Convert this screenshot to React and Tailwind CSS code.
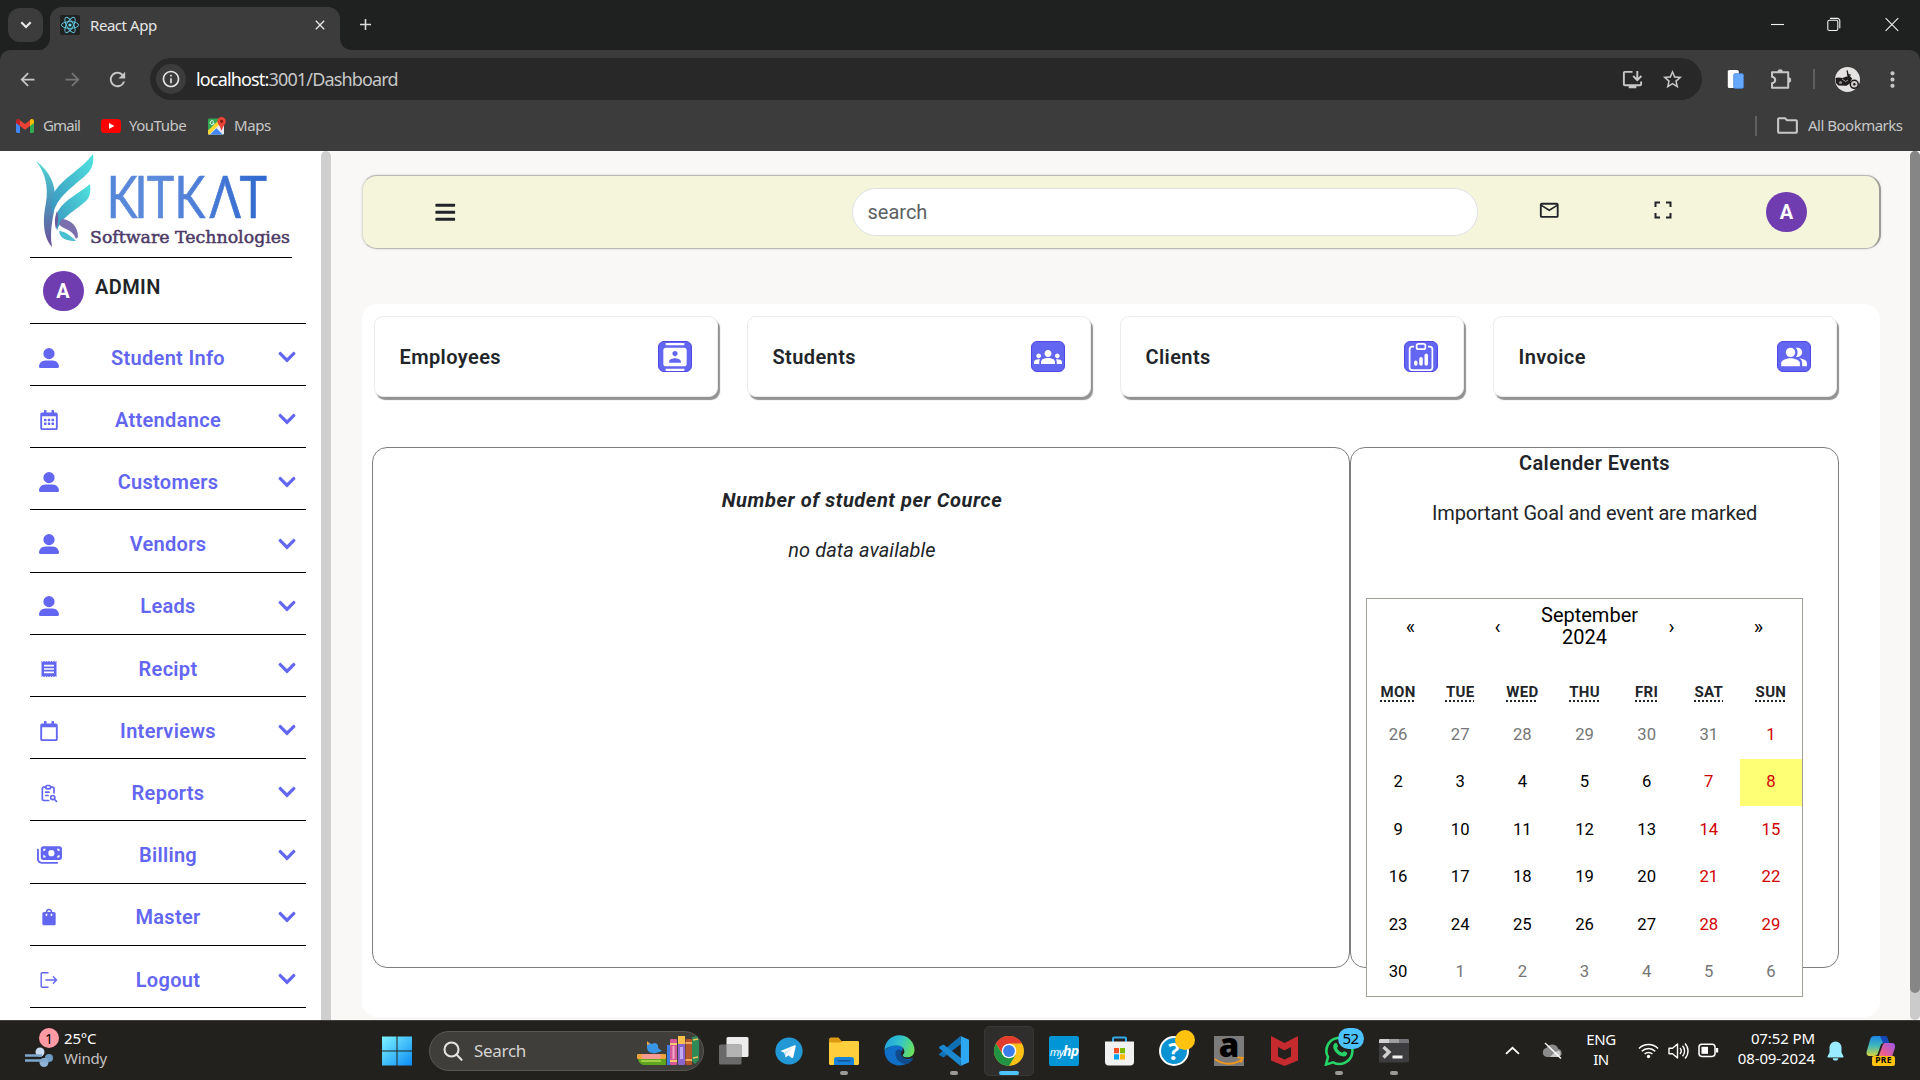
import React from "react";
import { FaRegCalendarAlt, FaRegCalendar, FaBars, FaChevronDown } from "react-icons/fa";
import { FaMoneyBills, FaUserLarge } from "react-icons/fa6";
import { TbReportSearch } from "react-icons/tb";
import {
  MdReceipt,
  MdShoppingBag,
  MdContacts,
  MdGroups,
  MdPeopleAlt,
  MdMailOutline,
  MdArrowBack,
  MdArrowForward,
  MdRefresh,
  MdOutlineInfo,
  MdInstallDesktop,
  MdStarOutline,
  MdMoreVert,
  MdOutlineFolder,
  MdAdd,
  MdClose,
} from "react-icons/md";
import { BsClipboardData } from "react-icons/bs";

const LogoutIcon = () => (
  <svg width="20" height="20" viewBox="0 0 20 20" fill="none" stroke="currentColor" strokeWidth="1.4">
    <path d="M9.5 2.7H3.200a1 1 0 0 0-1 1v12.600a1 1 0 0 0 1 1h6.300" />
    <path d="M6.800 10h10.600M14.400 6.800l3.100 3.200-3.100 3.200" strokeLinecap="round" />
  </svg>
);

const BillsIcon = () => <FaMoneyBills className="h-5 w-[25px]" />;

/* ---------- browser frame ---------- */

const ReactLogo = () => (
  <svg width="20" height="20" viewBox="0 0 20 20">
    <rect width="20" height="20" rx="2" fill="#222222" />
    <g fill="none" stroke="#5fc4dc" strokeWidth="0.95">
      <ellipse cx="10" cy="10" rx="8.6" ry="3.4" />
      <ellipse cx="10" cy="10" rx="8.6" ry="3.4" transform="rotate(60 10 10)" />
      <ellipse cx="10" cy="10" rx="8.6" ry="3.4" transform="rotate(120 10 10)" />
    </g>
    <circle cx="10" cy="10" r="1.6" fill="#61dafb" />
  </svg>
);

const TabStrip = () => (
  <div className="flex h-[50px] items-start bg-[#1f2120]">
    <div className="ml-2 mt-2 flex h-[34px] w-[35px] items-center justify-center rounded-xl bg-[#3c3c3c]">
      <svg width="12" height="8" viewBox="0 0 12 8" fill="none" stroke="#e8e8e8" strokeWidth="2.2">
        <path d="M1.3 1.3L6 6l4.7-4.7" />
      </svg>
    </div>
    <svg className="mt-[38px]" width="7" height="12" viewBox="0 0 7 12">
      <path d="M7 0v12H-5C2 12 7 7 7 0z" fill="#3c3c3c" />
    </svg>
    <div className="mt-[7px] flex h-[43px] w-[290px] items-center rounded-t-[12px] bg-[#3c3c3c] pb-[7px] pl-[10px] pr-[12px]">
      <ReactLogo />
      <span className="ml-[10px] flex-1 text-[15px] tracking-[-0.45px] text-[#e6e6e6]">React App</span>
      <MdClose className="h-4 w-4 text-[#e6e6e6]" />
    </div>
    <svg className="mt-[38px]" width="12" height="12" viewBox="0 0 12 12">
      <path d="M0 0v12h12C5 12 0 7 0 0z" fill="#3c3c3c" />
    </svg>
    <MdAdd className="ml-[4px] mt-[15px] h-[19px] w-[19px] text-[#dcdcdc]" />
    <div className="ml-auto flex items-center pt-[16px] text-[#f1f1f1]">
      <svg width="14" height="16" viewBox="0 0 14 16">
        <path d="M0 8.5h13" stroke="currentColor" strokeWidth="1.1" />
      </svg>
      <svg className="ml-[42px]" width="14" height="16" viewBox="0 0 14 16" fill="none" stroke="currentColor" strokeWidth="1.1">
        <rect x="0.8" y="4.3" width="10" height="10.2" rx="1.5" />
        <path d="M3 2.4h7.4a2.4 2.4 0 0 1 2.4 2.4v7.4" />
      </svg>
      <svg className="ml-[44px] mr-[21px]" width="14" height="16" viewBox="0 0 14 16" stroke="currentColor" strokeWidth="1.1">
        <path d="M0.6 2.2l12.6 12.6M13.2 2.2L.6 14.8" />
      </svg>
    </div>
  </div>
);

const ProfilePhoto = () => (
  <svg width="25" height="25" viewBox="0 0 25 25">
    <circle cx="12.5" cy="12.5" r="12.5" fill="#e4e3e1" />
    <g fill="#1f1a1c">
      <path d="M0.5 11l3-.6 4 .6 4-1.600 3 .200 2 2.600-1.500 4-3.500 2.600-8-.3-2.600-2.500z" />
      <path d="M11.500 3.500l1.200-.3 1 4.600 3.600 4-1.400.9-3.400-3.200z" />
      <path d="M12 7l4 .5-.5 1.200-3.500-.4z" />
    </g>
    <circle cx="19.3" cy="17.300" r="4" fill="#cfcbc9" stroke="#1f1a1c" strokeWidth="1.5" />
    <circle cx="19.3" cy="17.300" r="1.2" fill="#1f1a1c" />
    <circle cx="5.5" cy="15.500" r="1.6" fill="#8a8587" />
    <path d="M7 12l3 2M10 15l3-2" stroke="#9b9798" />
  </svg>
);

const AddressBar = () => (
  <div className="flex h-[58px] items-center rounded-t-[10px] bg-[#3c3c3c] text-[#c7c7c7]">
    <MdArrowBack className="ml-[17px] h-[21px] w-[21px]" />
    <MdArrowForward className="ml-[24px] h-[21px] w-[21px] text-[#757575]" />
    <MdRefresh className="ml-[23px] h-[23px] w-[23px]" />
    <div className="ml-[21px] flex h-[42px] w-[1552px] items-center rounded-full bg-[#282828] pl-[6px] pr-[18px]">
      <div className="flex h-[30px] w-[30px] items-center justify-center rounded-full bg-[#3c3c3c] text-[#e3e3e3]">
        <MdOutlineInfo className="h-[20px] w-[20px]" />
      </div>
      <span className="ml-[10px] flex-1 text-[18px] tracking-[-0.84px] text-[#c7c7c7]">
        <span className="text-white">localhost:</span>3001/Dashboard
      </span>
      <MdInstallDesktop className="h-[23px] w-[23px]" />
      <MdStarOutline className="ml-[17px] h-[23px] w-[23px]" />
    </div>
    <svg className="ml-[25px]" width="18" height="20" viewBox="0 0 18 20">
      <rect x="0.8" y="1" width="11" height="18" rx="1.6" fill="#ffffff" />
      <rect x="6.6" y="4.6" width="10" height="14.8" rx="1.6" fill="#66a8fb" stroke="#3f7fd8" strokeWidth="0.6" />
    </svg>
    <svg className="ml-[25px]" width="22" height="22" viewBox="0 0 22 22">
      <path
        d="M2 4.200h16.200v15.600H2v-4.600c2.200-.4 3.200-1.500 3.200-3.200S4.200 9.200 2 8.800z"
        fill="none"
        stroke="currentColor"
        strokeWidth="2"
        strokeLinejoin="round"
      />
      <path d="M7.500 4a2.700 2.700 0 0 1 5.400 0zM18.500 9.300a2.700 2.700 0 0 1 0 5.400z" fill="currentColor" />
    </svg>
    <div className="ml-[21px] h-5 w-[2px] bg-[#5f5f5f]" />
    <div className="ml-[20px]">
      <ProfilePhoto />
    </div>
    <MdMoreVert className="ml-[20px] h-[25px] w-[25px]" />
  </div>
);

const Bookmarks = () => (
  <div className="flex h-[43px] items-center bg-[#3c3c3c] pb-[8px] text-[15px] tracking-[-0.5px] text-[#c7c7c7]">
    <svg className="ml-4" width="18" height="14" viewBox="0 0 18 14">
      <path d="M0 2v10.6C0 13.4.6 14 1.4 14H4V6z" fill="#4285f4" />
      <path d="M18 2v10.6c0 .8-.6 1.4-1.4 1.4H14V6z" fill="#34a853" />
      <path d="M14 1.2V7l4-3V2.2C18 .4 16-.5 14.6.6z" fill="#fbbc04" />
      <path d="M4 7V1.2l5 3.7 5-3.7V7l-5 3.7z" fill="#ea4335" />
      <path d="M0 2.2V4l4 3V1.2L3.4.6C2-.5 0 .4 0 2.2z" fill="#c5221f" />
    </svg>
    <span className="ml-[9px] w-[38px] tracking-[-0.8px]">Gmail</span>
    <svg className="ml-[20px]" width="20" height="14" viewBox="0 0 20 14">
      <rect width="20" height="14" rx="3.6" fill="#ff0000" />
      <path d="M8 4l5.4 3L8 10z" fill="#fff" />
    </svg>
    <span className="ml-[8px] w-[57px] tracking-[-0.5px]">YouTube</span>
    <svg className="ml-[22px]" width="18" height="18" viewBox="0 0 18 18">
      <rect y="1.5" width="16" height="16" rx="1.2" fill="#34a853" />
      <path d="M0 17.5L16 2v14.3a1.2 1.2 0 0 1-1.2 1.2z" fill="#e8eaed" />
      <path d="M2 17.5l6.4-6.2 6.2 6.2z" fill="#4285f4" />
      <path d="M0 17V13.6L11 3l2 3L1.2 17.5z" fill="#fdd835" />
      <path d="M13.6 0a4.2 4.2 0 0 1 4.2 4.2c0 3.4-3.2 4.6-3.8 9h-.8c-.6-4.400-3.800-5.600-3.800-9A4.200 4.200 0 0 1 13.600 0z" fill="#ea4335" />
      <circle cx="13.600" cy="4.200" r="1.500" fill="#7d1c15" />
      <path d="M5.800 4.600a2 2 0 1 0 .3 1.400H4.300" fill="none" stroke="#fff" />
    </svg>
    <span className="ml-[8px] tracking-[-0.4px]">Maps</span>
    <div className="ml-auto h-5 w-[2px] bg-[#606060]" />
    <MdOutlineFolder className="ml-[18px] h-[25px] w-[25px]" />
    <span className="ml-[8px] mr-[17px] w-[95px] whitespace-nowrap">All Bookmarks</span>
  </div>
);

/* ---------- sidebar ---------- */

const KitkatLogo = () => (
  <svg className="overflow-visible" width="262" height="105" viewBox="0 0 262 105">
    <defs>
      <linearGradient id="leaf" x1="0" y1="1" x2="1" y2="0">
        <stop offset="0" stopColor="#3a93bf" />
        <stop offset="1" stopColor="#4fe3df" />
      </linearGradient>
      <linearGradient id="stem" x1="0" y1="0" x2="0" y2="1">
        <stop offset="0" stopColor="#4fd9d4" />
        <stop offset="0.45" stopColor="#4a97bd" />
        <stop offset="1" stopColor="#6e4f96" />
      </linearGradient>
      <linearGradient id="word" x1="0" y1="0" x2="1" y2="0">
        <stop offset="0" stopColor="#5485d8" />
        <stop offset="0.3" stopColor="#5f8cdc" />
        <stop offset="1" stopColor="#2f68cf" />
      </linearGradient>
    </defs>
    <path d="M6 10C19 20 26 32 25 50c-1 16-6 28-3 46-10-11-9-30-6-44C19 34 14 20 6 10z" fill="url(#stem)" />
    <path d="M63 3c1 9-1 15-6 20C43 36 26 46 23 64c-3-8-3-16 2-24C34 26 52 18 63 3z" fill="url(#leaf)" />
    <path d="M60 33c1 8 0 13-4 17C45 60 31 66 27 80c-2-10-2-15 1-20C35 48 50 42 60 33z" fill="url(#leaf)" />
    <path d="M32 68c9 1 16 7 16 18l-2 2c-2-6-6-8-10-10s-6-3-7-5z" fill="#7b6fae" />
    <path d="M29 80c5 0 11 4 17 10-9 0-16-2-17-10z" fill="#4bbfd0" />
    <path d="M27 60c2 8 1 12-1 18-2-8-1-12 1-18z" fill="#6e5a9c" />
    <text
      transform="scale(0.8 1)"
      x="115 138.800 163 200 244 279"
      y="67.500"
      textAnchor="middle"
      fill="url(#word)"
      stroke="url(#word)"
      strokeWidth="0.700"
      fontFamily="Lato, Roboto, sans-serif"
      fontSize="58"
    >
      KITKΛT
    </text>
    <text
      x="60"
      y="92"
      fill="#4d3a66"
      stroke="#4d3a66"
      strokeWidth="0.5"
      fontFamily="'DejaVu Serif', serif"
      fontSize="17.500"
      textLength="200"
      lengthAdjust="spacingAndGlyphs"
    >
      Software Technologies
    </text>
  </svg>
);

const menu = [
  ["Student Info", FaUserLarge],
  ["Attendance", FaRegCalendarAlt],
  ["Customers", FaUserLarge],
  ["Vendors", FaUserLarge],
  ["Leads", FaUserLarge],
  ["Recipt", MdReceipt],
  ["Interviews", FaRegCalendar],
  ["Reports", TbReportSearch],
  ["Billing", BillsIcon],
  ["Master", MdShoppingBag],
  ["Logout", LogoutIcon],
];

const Avatar = () => (
  <div className="flex h-10 w-[41px] shrink-0 items-center justify-center rounded-full bg-[#6f3db0] text-[20px] font-bold text-white">
    A
  </div>
);

const Sidebar = () => (
  <div className="flex w-[331px] shrink-0 bg-white">
    <aside className="h-full w-[321px] overflow-hidden pl-[30px]">
      <div className="h-[107px] w-[262px] border-b border-black">
        <KitkatLogo />
      </div>
      <div className="flex h-[65.900px] w-[276px] items-start border-b border-black pl-[12.500px] pt-[13px]">
        <Avatar />
        <span className="ml-[11.500px] mt-px text-[20px] font-semibold tracking-[0.400px] text-[#212529]">ADMIN</span>
      </div>
      {menu.map(([label, Icon]) => (
        <div
          key={label}
          className="flex h-[62.200px] w-[276px] items-center border-b border-black pt-[6.400px] text-[20px] font-semibold tracking-[0.300px] text-[#6366f1]"
        >
          <span className="flex w-[38px] justify-center">
            <Icon size={20} />
          </span>
          <span className="flex-1 text-center">{label}</span>
          <span className="flex w-[38px] justify-center">
            <FaChevronDown size={20} className="mb-px" />
          </span>
        </div>
      ))}
    </aside>
    <div className="h-full w-[10px] rounded-t-full bg-[#cfcfcf]" />
  </div>
);

/* ---------- dashboard ---------- */

const FullscreenIcon = () => (
  <svg width="18" height="18" viewBox="0 0 18 18" fill="none" stroke="currentColor" strokeWidth="2">
    <path d="M6 1.500H1.500V6M12 1.500h4.500V6M6 16.500H1.500V12M12 16.500h4.500V12" />
  </svg>
);

const TopBar = () => (
  <header className="flex h-[74px] w-[1519px] items-center rounded-[15px] border-y border-l border-r-2 border-y-[#bab9b6] border-l-[#dddcd2] border-r-[#9c9b95] bg-[#f5f5dc] text-[#212529] shadow-[0_0_2px_#c8c8c8]">
    <FaBars size={22.500} className="ml-[71px]" />
    <div className="ml-[395px] flex h-[48px] w-[626px] items-center rounded-full border border-[#dee2e6] bg-white px-[15px] text-[20px] text-[#5b5f63]">
      search
    </div>
    <MdMailOutline size={22.500} className="mb-1 ml-[60px]" />
    <div className="mb-[4px] ml-[94px]">
      <FullscreenIcon />
    </div>
    <div className="ml-[94px]">
      <Avatar />
    </div>
  </header>
);

const cards = [
  ["Employees", MdContacts],
  ["Students", MdGroups],
  ["Clients", BsClipboardData],
  ["Invoice", MdPeopleAlt],
];

const Cards = () => (
  <div className="flex gap-[29px] pl-[11.500px] pt-[12px]">
    {cards.map(([label, Icon]) => (
      <div
        key={label}
        className="flex h-[81px] w-[344px] items-center justify-between rounded-[9px] border border-[#ececec] bg-white pl-[25px] pr-[24.500px] text-[20px] font-semibold tracking-[0.4px] text-[#212529] shadow-[2px_3px_1px_#929292]"
      >
        {label}
        <span className="flex h-[31px] w-[34px] items-center justify-center overflow-hidden rounded-[6px] border border-[#4f46e5] bg-[#6366f1] text-white">
          <Icon size={28} className="shrink-0" />
        </span>
      </div>
    ))}
  </div>
);

const days = [
  26, 27, 28, 29, 30, 31, 1, 2, 3, 4, 5, 6, 7, 8, 9, 10, 11, 12, 13, 14, 15, 16, 17, 18, 19, 20, 21, 22, 23, 24, 25,
  26, 27, 28, 29, 30, 1, 2, 3, 4, 5, 6,
];

const dayStyle = (i) => {
  if (i < 6 || i > 35) return "text-[#757575]";
  if (i % 7 > 4) return i === 13 ? "bg-[#ffff76] text-[#d10000]" : "text-[#d10000]";
  return "text-black";
};

const Calendar = () => (
  <div className="h-[399px] w-[437px] border border-[#a0a096] bg-white text-black">
    <div className="mb-5 grid h-[55px] grid-cols-5 items-center text-center text-[20px]">
      <span>«</span>
      <span>‹</span>
      <span className="-mt-px text-[20px] leading-[22px]">
        September
        <br />
        2024
      </span>
      <span>›</span>
      <span>»</span>
    </div>
    <div className="grid grid-cols-7 text-center text-[15px] font-bold leading-[22px] tracking-[0.3px] text-[#212529]">
      {["MON", "TUE", "WED", "THU", "FRI", "SAT", "SUN"].map((d) => (
        <span key={d} className="pb-[8.400px] pt-[7px]">
          <abbr className="underline decoration-dotted decoration-[2px] underline-offset-[3px]">{d}</abbr>
        </span>
      ))}
    </div>
    <div className="grid grid-cols-7 text-center text-[16.670px]">
      {days.map((d, i) => (
        <span key={i} className={"flex h-[47.400px] items-center justify-center pb-px " + dayStyle(i)}>
          {d}
        </span>
      ))}
    </div>
  </div>
);

const Dashboard = () => (
  <main className="flex-1 pl-[31px] pt-6">
    <TopBar />
    <section className="mt-[55px] h-[713px] w-[1518px] rounded-[15px] bg-white">
      <Cards />
      <div className="ml-[10px] mt-[50px] flex h-[521px] text-[20px] text-[#212529]">
        <div className="w-[978px] rounded-[15px] border border-[#7e7e7e] pl-[2px] pt-[37px] text-center italic">
          <p className="font-bold leading-[30px] tracking-[0.58px]">Number of student per Cource</p>
          <p className="mt-5 leading-[30px] tracking-[0.08px]">no data available</p>
        </div>
        <div className="w-[489px] rounded-[15px] border border-[#7e7e7e] text-center">
          <p className="font-semibold leading-[30px] tracking-[0.4px]">Calender Events</p>
          <p className="mt-5 leading-[30px] tracking-[-0.140px]">Important Goal and event are marked</p>
          <div className="ml-[15px] mt-[70px]">
            <Calendar />
          </div>
        </div>
      </div>
    </section>
  </main>
);

/* ---------- taskbar ---------- */

const Windy = () => (
  <div className="relative ml-6 mt-[5px] h-8 w-8">
    <svg className="mt-[8px]" width="30" height="26" viewBox="0 0 30 26">
      <circle cx="16" cy="7" r="4.500" fill="#c9dbf0" />
      <circle cx="25" cy="13" r="4" fill="#6f9cc2" />
      <circle cx="20" cy="17.500" r="4.500" fill="#8eb3d4" />
      <path d="M1 10.500h17M1 15.500h23" stroke="#7ea6cb" strokeWidth="2.600" />
    </svg>
    <span className="absolute -top-[9px] left-[15px] flex h-5 w-5 items-center justify-center rounded-full bg-[#ff99a4] text-[14px] text-black">
      1
    </span>
  </div>
);

const SearchArt = () => (
  <svg width="62" height="30" viewBox="0 0 62 30">
    <path d="M1 23h28v6H8c-4 0-6-2-7-6z" fill="#5fa51f" />
    <path d="M4 25h20" stroke="#b6dc54" strokeWidth="1.500" />
    <rect x="0" y="18" width="29" height="5" rx="1" fill="#f0a33c" />
    <rect x="5" y="18" width="19" height="5" rx="2" fill="#f79a93" />
    <path d="M10 6l5 2c4-3 7 1 6 4l4 3-6 2c-6 1-9-2-9-6z" fill="#3a97e8" />
    <path d="M10 5l3 3-3 1z" fill="#f0a33c" />
    <rect x="30" y="9" width="3" height="20" fill="#3f7be0" />
    <rect x="33" y="3" width="7" height="26" rx="1" fill="#d65a98" />
    <path d="M33 8h7M33 25h7" stroke="#f7c96b" strokeWidth="2" />
    <path d="M36.500 10v13" stroke="#f4a9c9" strokeWidth="2" />
    <rect x="41" y="0" width="7" height="29" rx="1" fill="#8b66cf" />
    <path d="M41 4h7" stroke="#f7c14b" strokeWidth="8" />
    <path d="M44.500 11v12" stroke="#c3a9ee" strokeWidth="3" />
    <rect x="48.500" y="3" width="6.500" height="26" rx="1" fill="#b4552a" />
    <path d="M48.500 7h6.500M48.500 24h6.500" stroke="#f0a95c" strokeWidth="2" />
    <path d="M55 1l5-1 2 4v20l-4 4-3-3z" fill="#2f8a55" />
    <path d="M56 4l5-1M56 22l5-1" stroke="#f0c35c" strokeWidth="1.500" />
  </svg>
);

const WindowsLogo = () => (
  <svg width="30" height="30" viewBox="0 0 30 30">
    <defs>
      <linearGradient id="win" x1="0" y1="0" x2="1" y2="1">
        <stop offset="0" stopColor="#7df3ff" />
        <stop offset="1" stopColor="#0a8cf5" />
      </linearGradient>
    </defs>
    <path d="M0 .5h14.500v14H0zM15.500.5H30v14H15.500zM0 15.500h14.500v14H0zM15.500 15.500H30v14H15.500z" fill="url(#win)" />
  </svg>
);

const TaskView = () => (
  <svg width="30" height="30" viewBox="0 0 30 30">
    <rect x="7.500" y="1" width="22" height="20" rx="1.500" fill="#ececec" />
    <rect x="0" y="8.500" width="22.500" height="20" rx="1.500" fill="#6a6a6a" />
    <rect x="7.500" y="8.500" width="15" height="12.500" fill="#b3b3b3" />
  </svg>
);

const Telegram = () => (
  <svg width="28" height="28" viewBox="0 0 28 28">
    <circle cx="14" cy="14" r="13.600" fill="#2398d6" />
    <path d="M5.500 14L19.600 8.300c.8-.3 1.300.2 1.100 1.100l-2.400 10.900c-.2.800-.9 1-1.500.6l-3.600-2.700-1.800 1.800c-.5.500-.9.300-1-.3L9.300 15.700z" fill="#fff" />
    <path d="M9.300 15.700l8-5-6.200 6-.5 3z" fill="#bcdcf2" />
  </svg>
);

const Explorer = () => (
  <svg width="30" height="30" viewBox="0 0 30 30">
    <path d="M0 3.500C0 2.500.8 1.500 2 1.500h7.500l3 3.500H28c1.200 0 2 .8 2 2v6H0z" fill="#dc9a12" />
    <path d="M0 6.500h12L14 5h14.500c.8 0 1.500.7 1.500 1.500v21c0 .8-.7 1.500-1.500 1.500h-27C.7 29 0 28.300 0 27.500z" fill="#ffce3d" />
    <path d="M5 29v-5.500c0-1.400 1-2.500 2.500-2.500h15c1.500 0 2.500 1.100 2.500 2.500V29z" fill="#1683d8" />
    <path d="M8.500 24.800h13" stroke="#0c4f96" strokeWidth="1.400" />
  </svg>
);

const Edge = () => (
  <svg width="31" height="31" viewBox="0 0 31 31">
    <defs>
      <linearGradient id="edgeTop" x1="0" y1="0.300" x2="1" y2="0.600">
        <stop offset="0" stopColor="#1fa2e0" />
        <stop offset="0.500" stopColor="#33c6c8" />
        <stop offset="1" stopColor="#6be05a" />
      </linearGradient>
    </defs>
    <path d="M.5 15.500C.5 24 7 30.500 15.500 30.500c5.500 0 10.500-3 13.500-7.500l-9-1-2-11-8-3z" fill="#0f6fc9" />
    <path d="M.5 15.500a15 15 0 0 1 30-.5c0 5-3.500 7.500-7.500 7.500-3 0-4.500-1.200-4.300-2.400.2-.9 1.600-1.400 1.600-3.900 0-3-3-6-7.800-6C5.500 10.200 1.500 13.500.5 15.500z" fill="url(#edgeTop)" />
    <path d="M11.500 17c-1 6.500 5 13 12 12 2.500-1 4.600-3 5.500-5.500-5 2.600-11 .8-12-4-.2-1.300.1-2.600.8-3.600C16 13.500 12 14 11.500 17z" fill="#114b8b" />
    <path d="M17.800 15.800c-1.400 2-1 4.600.6 6.200 2.400 2.300 7 2.600 10.400 1l-1.300-1.500c-1.300.7-2.900 1-4.500 1-3 0-4.500-1.200-4.300-2.400.2-.9 1.600-1.400 1.600-3.900-.9-1-1.900-1-2.500-.4z" fill="#23211e" />
  </svg>
);

const VsCode = () => (
  <svg width="30" height="30" viewBox="0 0 30 30">
    <path d="M21.500 0L22 8 4.500 21.500.5 19.300c-.6-.5-.6-1.300 0-1.800z" fill="#1070b3" />
    <path d="M22 22L4.500 8.500.5 10.600c-.6.500-.6 1.300 0 1.800L21.500 30z" fill="#1b88cf" />
    <path d="M21.500 0L30 3.800v22.400L21.500 30l.3-.3V.300z" fill="#2ea7f2" />
  </svg>
);

const Chrome = () => (
  <svg width="30" height="30" viewBox="0 0 30 30">
    <circle cx="15" cy="15" r="15" fill="#fbc116" />
    <path d="M2 7.500a15 15 0 0 1 26 0H15L9 18.500z" fill="#e33b2e" />
    <path d="M2 7.500A15 15 0 0 0 15 30l6.500-11.300L15 22 8.800 18.800z" fill="#229342" />
    <circle cx="15" cy="15" r="7.300" fill="#fff" />
    <circle cx="15" cy="15" r="5.900" fill="#3b7ded" />
  </svg>
);

const MyHp = () => (
  <div className="flex h-[30px] w-[30px] items-center justify-center rounded-[2px] bg-[#0096d6] text-white">
    <span className="text-[11px] italic leading-none tracking-[-0.800px]">
      my<b className="text-[14px] font-bold">hp</b>
    </span>
  </div>
);

const Store = () => (
  <svg width="29" height="30" viewBox="0 0 29 30">
    <path d="M8 6.500V2.500C8 2 8.500 1.500 9 1.500h11c.5 0 1 .5 1 1v4" fill="none" stroke="#32a9e8" strokeWidth="2" />
    <path d="M0 5.500h29V26c0 2-1.500 3.500-3.500 3.500h-22C1.500 29.500 0 28 0 26z" fill="#f1f1f1" />
    <path d="M9 12h5v5.300H9z" fill="#f25022" />
    <path d="M15 12h5v5.300h-5z" fill="#7fba00" />
    <path d="M9 18.300h5v5.200H9z" fill="#00a4ef" />
    <path d="M15 18.300h5v5.200h-5z" fill="#ffb900" />
  </svg>
);

const Help = () => (
  <div className="relative">
    <div className="flex h-[30px] w-[30px] items-center justify-center rounded-full border-2 border-white bg-[#0a93d2] text-[24px] font-bold leading-none text-white">
      ?
    </div>
    <span className="absolute -right-[6px] -top-[6px] h-5 w-5 rounded-full bg-[#ffc20e]" />
  </div>
);

const Amazon = () => (
  <div className="relative h-[30px] w-[30px] bg-[#7b7b7b] text-center font-[Open_Sans] text-[33px] font-extrabold leading-[17px] text-black">
    a
    <svg className="absolute bottom-[1px] left-0" width="30" height="9" viewBox="0 0 30 9" fill="none" stroke="#f0961a" strokeWidth="1.800">
      <path d="M.8 3c8 6 19 6.500 27 .5M23.500 1.500l5.200.4L27 6.500" />
    </svg>
  </div>
);

const McAfee = () => (
  <svg width="27" height="30" viewBox="0 0 27 30">
    <path d="M0 0l13.500 7L27 0v24.500L13.500 30 0 24.500z" fill="#c52a2e" />
    <path d="M7 11v9.500l6.500 3 6.500-3V11l-6.500 3.500z" fill="#23211e" />
  </svg>
);

const WhatsApp = () => (
  <div className="relative">
    <svg width="31" height="31" viewBox="0 0 31 31">
      <path d="M2 29.500l2-7.400A13 13 0 1 1 9.200 27.300z" fill="none" stroke="#25d366" strokeWidth="2.600" />
      <path d="M10.500 8.500c1-1 2-.8 2.500.3l.9 2c.3.800-.9 1.900-.8 2.400 1 2 2.600 3.500 4.800 4.400.8.200 1.600-1.700 2.400-1.400l2.200 1c1 .5.900 1.300.4 2.200-.9 1.700-2.700 2.400-4.700 1.900-4.500-1.200-7.300-4.200-8.600-7.600-.7-2-.5-3.900.9-5.200z" fill="#25d366" />
    </svg>
    <span className="absolute -right-[9px] -top-[7px] flex h-[21px] w-[26px] items-center justify-center rounded-full bg-[#4cc2ff] text-[15px] tracking-[-0.500px] text-black">
      52
    </span>
  </div>
);

const Terminal = () => (
  <svg width="30" height="24" viewBox="0 0 30 24">
    <rect width="30" height="23.500" rx="1.500" fill="#3d3d3f" />
    <path d="M0 1.500C0 .7.700 0 1.500 0H10v4H0z" fill="#d2cfd2" />
    <path d="M10 0h10v4H10z" fill="#a09da0" />
    <path d="M20 0h8.500c.8 0 1.500.7 1.500 1.500V4H20z" fill="#77757a" />
    <path d="M4.500 8l5.500 5-5.500 5.500" fill="none" stroke="#d0d0d0" strokeWidth="3.400" />
    <path d="M13.500 18h10" stroke="#f2f2f2" strokeWidth="3" />
  </svg>
);

const apps = [
  [TaskView],
  [Telegram],
  [Explorer, "dot"],
  [Edge],
  [VsCode, "dot"],
  [Chrome, "active"],
  [MyHp],
  [Store],
  [Help],
  [Amazon],
  [McAfee],
  [WhatsApp, "dot"],
  [Terminal, "dot"],
];

const AppSlot = ({ Icon, state }) => (
  <div
    className={
      "relative flex h-[50px] w-[50px] items-center justify-center rounded-[5px] " +
      (state === "active" ? "border border-[#3a3836] bg-[#302e2c]" : "")
    }
  >
    <Icon />
    {state === "dot" && <span className="absolute bottom-[1px] left-[21px] h-1 w-2 rounded-full bg-[#9b9a99]" />}
    {state === "active" && <span className="absolute bottom-0 left-[14px] h-1 w-5 rounded-full bg-[#4cc2ff]" />}
  </div>
);

const Tray = () => (
  <div className="ml-auto flex items-center text-white">
    <svg width="15" height="9" viewBox="0 0 15 9" fill="none" stroke="currentColor" strokeWidth="1.800">
      <path d="M1 7.800l6.500-6 6.500 6" />
    </svg>
    <svg className="ml-[22px]" width="21" height="17" viewBox="0 0 21 17">
      <path d="M5 15a4.500 4.500 0 0 1-.5-8.900A6.300 6.300 0 0 1 16.300 7 4.100 4.100 0 0 1 16.500 15z" fill="#8b8b8b" />
      <path d="M8 15l5-5 4-1.500a4 4 0 0 1-.5 6.500z" fill="#c9c9c9" />
      <path d="M3 1l16 15.500" stroke="#fff" strokeWidth="1.400" />
    </svg>
    <div className="mb-[3px] ml-[22px] w-[32px] text-center text-[15px] leading-[20px] tracking-[-0.400px]">
      ENG
      <br />
      IN
    </div>
    <svg className="ml-[21px]" width="21" height="17" viewBox="0 0 21 17" fill="none" stroke="currentColor" strokeWidth="1.500">
      <path d="M1 6.500a13.500 13.500 0 0 1 19 0M3.800 9.300a9.500 9.500 0 0 1 13.400 0M6.600 12a5.500 5.500 0 0 1 7.800 0" />
      <circle cx="10.500" cy="14.500" r="1.700" fill="currentColor" stroke="none" />
    </svg>
    <svg className="ml-[9px]" width="21" height="18" viewBox="0 0 21 18" fill="none" stroke="currentColor" strokeWidth="1.400">
      <path d="M1 6.200h3.500L9.500 2v14l-5-4.200H1z" strokeLinejoin="round" />
      <path d="M12 6c1.500 1.800 1.500 4.200 0 6M14.500 3.800c2.800 3 2.800 7.400 0 10.400M17 1.500c4 4.200 4 10.800 0 15" />
    </svg>
    <svg className="ml-[9px]" width="21" height="15" viewBox="0 0 21 15" fill="none" stroke="currentColor" strokeWidth="1.500">
      <rect x="1" y="1.200" width="16" height="12.200" rx="2.800" />
      <rect x="3.500" y="3.800" width="6.500" height="7" fill="currentColor" stroke="none" />
      <path d="M19 5v4.500" strokeWidth="2.400" />
    </svg>
    <div className="mb-[5px] ml-[14px] w-[82px] whitespace-nowrap text-right text-[15px] leading-[20px] tracking-[-0.100px]">
      07:52 PM
      <br />
      08-09-2024
    </div>
    <svg className="ml-[12px]" width="17" height="20" viewBox="0 0 17 20" fill="#99ebff">
      <path d="M8.500.5A6 6 0 0 1 14.500 6.500v5l1.900 3.700c.3.600 0 1.300-.7 1.300H1.300c-.7 0-1-.7-.7-1.300L2.500 11.500v-5a6 6 0 0 1 6-6z" />
      <path d="M5.700 17.200h5.600a2.800 2.300 0 0 1-5.600 0z" />
    </svg>
    <div className="relative ml-[22px] mr-[24px] h-[30px] w-[30px]">
      <svg width="30" height="27" viewBox="0 0 30 27">
        <defs>
          <linearGradient id="copA" x1="0" y1="0" x2="0" y2="1">
            <stop offset="0" stopColor="#1b86e8" />
            <stop offset="0.500" stopColor="#42b8b8" />
            <stop offset="1" stopColor="#d8d33a" />
          </linearGradient>
          <linearGradient id="copB" x1="1" y1="0" x2="0" y2="1">
            <stop offset="0" stopColor="#9a59e8" />
            <stop offset="0.600" stopColor="#ea5c92" />
            <stop offset="1" stopColor="#f59a5c" />
          </linearGradient>
        </defs>
        <path d="M8 0h10c2 0 3 1 3.500 3L23 7h-5c-2 0-3 1-3.600 3L12 17c-.7 2-2 3-4 3H4c-3 0-4-2-3.200-5L4 4C4.700 1.500 6 0 8 0z" fill="url(#copA)" />
        <path d="M14 0h4.500c2 0 3 1 3.500 3l1 4h-6z" fill="#1547b5" />
        <path d="M19 7h6.500c3 0 4.200 2 3.400 5l-3 9c-.7 2.500-2 4-4 4H11l5-14c.6-2 1.200-4 3-4z" fill="url(#copB)" />
      </svg>
      <span className="absolute bottom-0 left-[6px] flex h-[10px] w-[23px] items-center justify-center rounded-[2px] bg-[#ffc20e] text-[8.500px] font-bold tracking-[0.300px] text-black">
        PRE
      </span>
    </div>
  </div>
);

const Taskbar = () => (
  <footer className="flex h-[60px] items-center border-t border-[#42403e] bg-[#23211e]">
    <div className="flex w-[382px] items-center">
      <Windy />
      <div className="mb-[5px] ml-[8px] text-[15px] leading-[20px] tracking-[-0.200px] text-white">
        25°C
        <div className="text-[#c3c2c1]">Windy</div>
      </div>
    </div>
    <WindowsLogo />
    <div className="ml-[17px] mr-[18px] flex h-10 w-[275px] items-center rounded-full border border-[#5a5855] bg-[#403e3b] pl-[13px] pr-[4px]">
      <svg width="20" height="20" viewBox="0 0 20 20" fill="none" stroke="#e2e2e2" strokeWidth="2.100">
        <circle cx="8.500" cy="8.500" r="7" />
        <path d="M13.500 13.500l5 5.300" strokeLinecap="round" />
      </svg>
      <span className="ml-[11px] flex-1 text-[17px] tracking-[-0.300px] text-[#d5d4d3]">Search</span>
      <SearchArt />
    </div>
    <div className="-ml-[13px] flex gap-[5px]">
      {apps.map(([Icon, state], i) => (
        <AppSlot key={i} Icon={Icon} state={state} />
      ))}
    </div>
    <Tray />
  </footer>
);

export default function App() {
  return (
    <div className="flex h-[1080px] w-[1920px] flex-col overflow-hidden bg-[#1f2120] font-['Noto_Sans',sans-serif]">
      <TabStrip />
      <AddressBar />
      <Bookmarks />
      <div className="flex h-[869px] overflow-hidden bg-[#f9f8f6] font-[Roboto,sans-serif]">
        <Sidebar />
        <Dashboard />
        <div className="h-full w-[10px] shrink-0 rounded-full bg-[#cbcbcb]">
          <div className="h-[842px] rounded-full bg-[#868686]" />
        </div>
      </div>
      <Taskbar />
    </div>
  );
}
